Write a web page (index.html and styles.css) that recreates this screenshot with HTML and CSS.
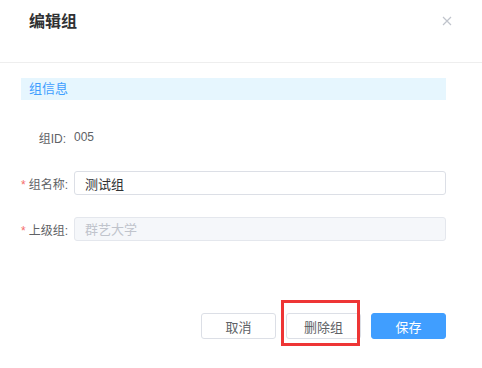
FILE: index.html
```html
<!DOCTYPE html>
<html lang="zh-CN">
<head>
    <meta charset="UTF-8">
    <title>编辑组</title>
    <link rel="stylesheet" href="styles.css">
</head>
<body>
    <div class="dialog">
        <div class="dialog-header">
            <h2 class="dialog-title">编辑组</h2>
            <span class="dialog-close">
                <svg width="10" height="10" viewBox="0 0 10 10">
                    <path d="M1 1 L9 9 M9 1 L1 9" stroke="#c0c4cc" stroke-width="1.2" fill="none"/>
                </svg>
            </span>
        </div>

        <div class="dialog-body">
            <div class="section-title">组信息</div>

            <div class="form">
                <div class="form-row">
                    <label class="form-label">组ID:</label>
                    <span class="form-value">005</span>
                </div>
                <div class="form-row">
                    <label class="form-label"><i class="req">*</i>组名称:</label>
                    <input class="form-input" type="text" value="测试组">
                </div>
                <div class="form-row">
                    <label class="form-label"><i class="req">*</i>上级组:</label>
                    <input class="form-input" type="text" placeholder="群艺大学" disabled>
                </div>
            </div>
        </div>

        <div class="dialog-footer">
            <button class="btn">取消</button>
            <button class="btn btn-marked">删除组</button>
            <button class="btn btn-primary">保存</button>
        </div>
    </div>
</body>
</html>
```

FILE: styles.css
```css
* {
    margin: 0;
    padding: 0;
    box-sizing: border-box;
}

body {
    font-family: "Liberation Sans", "Noto Sans CJK SC", sans-serif;
    background: #ffffff;
    color: #606266;
}

.dialog {
    width: 482px;
    height: 368px;
    background: #fff;
}

.dialog-header {
    height: 63px;
    padding: 11px 30px 0 29px;
    display: flex;
    justify-content: space-between;
    align-items: flex-start;
    border-bottom: 1px solid #eeeeee;
}

.dialog-title {
    font-size: 16px;
    line-height: 22px;
    font-weight: 700;
    color: #303133;
}

.dialog-close {
    display: flex;
    margin-top: 5px;
}

.dialog-body {
    padding: 15px 36px 0 21px;
}

.section-title {
    height: 22px;
    line-height: 22px;
    padding-left: 8px;
    font-size: 13px;
    color: #409eff;
    background: #e6f6fe;
}

.form {
    margin-top: 25px;
    display: flex;
    flex-direction: column;
    gap: 22px;
}

.form-row {
    display: flex;
    align-items: center;
    height: 24px;
}

.form-label {
    width: 53px;
    padding-right: 8px;
    text-align: right;
    font-size: 12px;
    color: #606266;
    white-space: nowrap;
}

.req {
    font-style: normal;
    color: #f56c6c;
    margin-right: 3px;
}

.form-value {
    font-size: 12px;
    color: #606266;
}

.form-input {
    flex: 1;
    height: 24px;
    padding: 0 10px;
    font-family: inherit;
    font-size: 13px;
    color: #303133;
    border: 1px solid #dcdfe6;
    border-radius: 3px;
    outline: none;
    background: #fff;
}

.form-input:disabled {
    background: #f5f7fa;
    border-color: #e4e7ed;
}

.form-input::placeholder {
    color: #c0c4cc;
}

.dialog-footer {
    margin-top: 72px;
    padding-right: 36px;
    display: flex;
    justify-content: flex-end;
    gap: 10px;
}

.btn {
    width: 75px;
    height: 26px;
    font-family: inherit;
    font-size: 13px;
    color: #606266;
    background: #fff;
    border: 1px solid #dcdfe6;
    border-radius: 3px;
    cursor: pointer;
}

.btn-primary {
    background: #409eff;
    border-color: #409eff;
    color: #fff;
}

/* red annotation frame drawn over the delete button */
.btn-marked {
    position: relative;
}

.btn-marked::after {
    content: '';
    position: absolute;
    box-sizing: border-box;
    left: -6px;
    top: -14px;
    width: 79px;
    height: 46px;
    border: 3px solid #ee3535;
}
```
